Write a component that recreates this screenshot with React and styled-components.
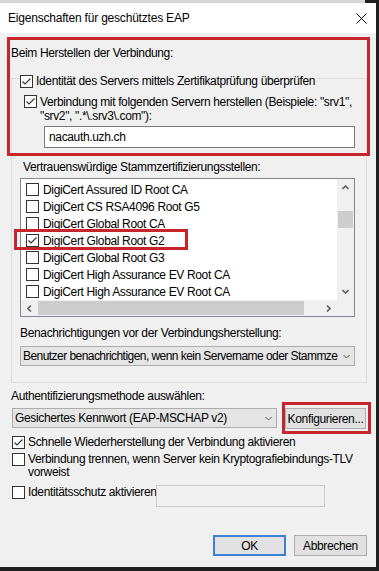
import React from "react";
import styled, { createGlobalStyle } from "styled-components";

const GlobalStyle = createGlobalStyle`
  html, body {
    margin: 0;
    padding: 0;
  }
  body {
    background: #1f1f1f;
    font-family: "Segoe UI", "Liberation Sans", Arial, sans-serif;
    font-size: 12px;
    letter-spacing: -0.35px;
    color: #000;
  }
  * {
    box-sizing: border-box;
  }
`;

const certs = [
  { name: "DigiCert Assured ID Root CA" },
  { name: "DigiCert CS RSA4096 Root G5" },
  { name: "DigiCert Global Root CA" },
  { name: "DigiCert Global Root G2", checked: true },
  { name: "DigiCert Global Root G3" },
  { name: "DigiCert High Assurance EV Root CA" },
  { name: "DigiCert High Assurance EV Root CA" },
];

const Check = ({ checked }) => (
  <CheckBox>
    {checked && (
      <svg width="11" height="11" viewBox="0 0 11 11">
        <polyline points="1.5,5.5 4,8 9.5,2.5" fill="none" stroke="#333" strokeWidth="1.1" />
      </svg>
    )}
  </CheckBox>
);

const Chevron = ({ dir = "down", color = "#606060", size = 7, weight = 1 }) => {
  const pts = {
    down: "0.5,1 3.5,4 6.5,1",
    up: "0.5,4 3.5,1 6.5,4",
    left: "4,0.5 1,3.5 4,6.5",
    right: "1,0.5 4,3.5 1,6.5",
  }[dir];
  const vertical = dir === "down" || dir === "up";
  return (
    <svg
      width={vertical ? size : 5}
      height={vertical ? 5 : size}
      viewBox={vertical ? "0 0 7 5" : "0 0 5 7"}
    >
      <polyline points={pts} fill="none" stroke={color} strokeWidth={weight} />
    </svg>
  );
};

const App = () => {
  return (
    <Page>
      <GlobalStyle />
      <TopEdge />
      <Window>
        <TitleBar>
          <Title>Eigenschaften für geschütztes EAP</Title>
          <svg width="11" height="11" viewBox="0 0 11 11">
            <path d="M0.5 0.5 L10.5 10.5 M10.5 0.5 L0.5 10.5" stroke="#000" strokeWidth="1" />
          </svg>
        </TitleBar>

        <Body>
          <Label $mt="13px">Beim Herstellen der Verbindung:</Label>

          <GroupBox>
            <Legend>
              <Check checked />
              <span>Identität des Servers mittels Zertifikatprüfung überprüfen</span>
            </Legend>

            <CheckRow $ml="12px" $mt="7px" $lh="14px">
              <Check checked />
              <span>
                Verbindung mit folgenden Servern herstellen (Beispiele: "srv1",
                <br />
                "srv2", ".*\.srv3\.com"):
              </span>
            </CheckRow>

            <TextInput $ml="32px" $mt="3px" $w="311px">nacauth.uzh.ch</TextInput>

            <Label $ml="11px" $mt="12px">Vertrauenswürdige Stammzertifizierungsstellen:</Label>

            <ListBox>
              <ListItems>
                {certs.map((c, i) => (
                  <ListItem key={i}>
                    <Check checked={c.checked} />
                    <span>{c.name}</span>
                  </ListItem>
                ))}
              </ListItems>
              <VScroll>
                <ScrollArrow>
                  <Chevron dir="up" weight={1.6} />
                </ScrollArrow>
                <VThumbTrack>
                  <VThumb />
                </VThumbTrack>
                <ScrollArrow>
                  <Chevron dir="down" weight={1.6} />
                </ScrollArrow>
              </VScroll>
              <HScroll>
                <ScrollArrow>
                  <Chevron dir="left" weight={1.6} />
                </ScrollArrow>
                <HThumb />
                <ScrollArrow>
                  <Chevron dir="right" weight={1.6} />
                </ScrollArrow>
              </HScroll>
              <Corner />
            </ListBox>

            <Label $ml="8px" $mt="9px">Benachrichtigungen vor der Verbindungsherstellung:</Label>

            <Select $ml="8px" $mt="6px" $w="335px">
              <SelectText $tight>Benutzer benachrichtigen, wenn kein Servername oder Stammzertifikat angegeben ist</SelectText>
              <Chevron dir="down" color="#555" />
            </Select>
          </GroupBox>

          <Label $mt="6px">Authentifizierungsmethode auswählen:</Label>

          <MethodRow>
            <Select $ml="1px" $w="265px">
              <SelectText>Gesichertes Kennwort (EAP-MSCHAP v2)</SelectText>
              <Chevron dir="down" color="#555" />
            </Select>
            <Button $w="81px">Konfigurieren...</Button>
          </MethodRow>

          <CheckRow $ml="1px" $mt="7px" $lh="13px">
            <Check checked />
            <span>Schnelle Wiederherstellung der Verbindung aktivieren</span>
          </CheckRow>

          <CheckRow $ml="1px" $mt="4px" $lh="13px">
            <Check />
            <span>
              Verbindung trennen, wenn Server kein Kryptografiebindungs-TLV
              <br />
              vorweist
            </span>
          </CheckRow>

          <ProtectRow>
            <CheckRow $ml="1px" $lh="13px">
              <Check />
              <span>Identitätsschutz aktivieren</span>
            </CheckRow>
            <TextInput $w="169px" $disabled />
          </ProtectRow>

          <ButtonRow>
            <Button $w="73px" $primary>
              OK
            </Button>
            <Button $w="73px">Abbrechen</Button>
          </ButtonRow>
        </Body>

        <RedMark $top="34px" $left="7px" $w="363px" $h="119px" />
        <RedMark $top="226px" $left="14px" $w="174px" $h="21px" />
        <RedMark $top="399px" $left="282px" $w="89px" $h="32px" />
      </Window>
    </Page>
  );
};

export default App;

const Page = styled.div`
  width: 379px;
  height: 571px;
  background: #1f1f1f;
  overflow: hidden;
`;

const TopEdge = styled.div`
  width: 365px;
  height: 3px;
  background: #d6d6d6;
`;

const Window = styled.div`
  position: relative;
  width: 376px;
  height: 564px;
  display: flex;
  flex-direction: column;
  background: #f0f0f0;
`;

const TitleBar = styled.div`
  height: 30px;
  background: #fff;
  display: flex;
  align-items: center;
  justify-content: space-between;
  padding: 0 9px 0 8px;
`;

const Title = styled.div`
  font-size: 12px;
  letter-spacing: -0.2px;
`;

const Body = styled.div`
  flex: 1;
  display: flex;
  flex-direction: column;
  align-items: flex-start;
  padding: 0 9px 0 11px;
`;

const Label = styled.div`
  margin-top: ${({ $mt }) => $mt || "0"};
  margin-left: ${({ $ml }) => $ml || "0"};
  line-height: 14px;
  white-space: nowrap;
`;

const GroupBox = styled.div`
  margin-top: 18px;
  width: 356px;
  border: 1px solid #dcdcdc;
  padding-bottom: 16px;
  display: flex;
  flex-direction: column;
  align-items: flex-start;
`;

const Legend = styled.div`
  margin-top: -4px;
  margin-left: 8px;
  padding-right: 2px;
  display: flex;
  align-items: center;
  gap: 3px;
  line-height: 13px;
  height: 13px;
  background: #f0f0f0;
  white-space: nowrap;
`;

const CheckBox = styled.span`
  flex: none;
  width: 13px;
  height: 13px;
  border: 1px solid #333;
  background: #fff;
  display: flex;
  align-items: center;
  justify-content: center;
`;

const CheckRow = styled.div`
  margin-top: ${({ $mt }) => $mt || "0"};
  margin-left: ${({ $ml }) => $ml || "0"};
  display: flex;
  align-items: flex-start;
  gap: 3px;
  line-height: ${({ $lh }) => $lh};
  white-space: nowrap;
`;

const TextInput = styled.div`
  margin-top: ${({ $mt }) => $mt || "0"};
  margin-left: ${({ $ml }) => $ml || "0"};
  width: ${({ $w }) => $w};
  height: 22px;
  border: 1px solid ${({ $disabled }) => ($disabled ? "#cccccc" : "#7a7a7a")};
  background: ${({ $disabled }) => ($disabled ? "#f0f0f0" : "#fff")};
  padding: 0 4px;
  display: flex;
  align-items: center;
`;

const ListBox = styled.div`
  margin-top: 4px;
  margin-left: 8px;
  width: 335px;
  height: 139px;
  border: 1px solid #828790;
  background: #fff;
  display: grid;
  grid-template-columns: 1fr 17px;
  grid-template-rows: 1fr 16px;
  overflow: hidden;
`;

const ListItems = styled.div`
  padding-top: 2px;
  overflow: hidden;
`;

const ListItem = styled.div`
  height: 17px;
  display: flex;
  align-items: center;
  gap: 4px;
  padding-left: 5px;
  white-space: nowrap;
`;

const VScroll = styled.div`
  background: #f0f0f0;
  display: flex;
  flex-direction: column;
`;

const ScrollArrow = styled.div`
  flex: none;
  width: 17px;
  height: 17px;
  display: flex;
  align-items: center;
  justify-content: center;
`;

const VThumbTrack = styled.div`
  flex: 1;
  padding-top: 15px;
`;

const VThumb = styled.div`
  height: 17px;
  margin: 0 1px;
  background: #cdcdcd;
`;

const HScroll = styled.div`
  background: #f0f0f0;
  display: flex;
  align-items: center;
  & > div:first-child,
  & > div:last-child {
    height: 16px;
  }
`;

const HThumb = styled.div`
  height: 14px;
  width: 266px;
  margin-right: auto;
  background: #cdcdcd;
`;

const Corner = styled.div`
  background: #f0f0f0;
`;

const Select = styled.div`
  margin-top: ${({ $mt }) => $mt || "0"};
  margin-left: ${({ $ml }) => $ml || "0"};
  width: ${({ $w }) => $w};
  height: 20px;
  border: 1px solid #adadad;
  background: #e5e5e5;
  display: flex;
  align-items: center;
  gap: 5px;
  padding: 0 4px 0 2px;
`;

const SelectText = styled.span`
  flex: 1;
  overflow: hidden;
  white-space: nowrap;
  letter-spacing: ${({ $tight }) => ($tight ? "-0.55px" : "inherit")};
`;

const MethodRow = styled.div`
  margin-top: 5px;
  display: flex;
  align-items: flex-start;
  gap: 8px;
`;

const Button = styled.div`
  width: ${({ $w }) => $w};
  height: 21px;
  border: ${({ $primary }) => ($primary ? "2px solid #3c7fd6" : "1px solid #adadad")};
  background: #e1e1e1;
  display: flex;
  align-items: center;
  justify-content: center;
  white-space: nowrap;
`;

const ProtectRow = styled.div`
  margin-top: 6px;
  display: flex;
  align-items: flex-start;
  & > div:first-child {
    margin-top: 1px;
  }
  & > div:last-child {
    margin-left: -1px;
  }
`;

const ButtonRow = styled.div`
  margin-top: 28px;
  align-self: flex-end;
  display: flex;
  gap: 8px;
`;

const RedMark = styled.div`
  position: absolute;
  top: ${({ $top }) => $top};
  left: ${({ $left }) => $left};
  width: ${({ $w }) => $w};
  height: ${({ $h }) => $h};
  border: 3px solid #c8242b;
  pointer-events: none;
`;
